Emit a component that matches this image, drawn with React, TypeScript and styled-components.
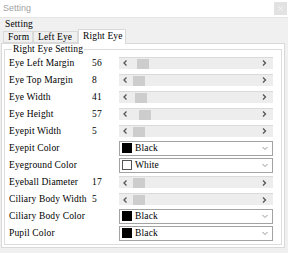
import React from 'react'
import styled, { createGlobalStyle } from 'styled-components'

const GlobalStyle = createGlobalStyle`
  html, body {
    margin: 0;
    padding: 0;
    background: #f0f0f0;
  }
  body {
    width: 288px;
    height: 253px;
    overflow: hidden;
  }
`

const Window = styled.div`
  width: 288px;
  height: 253px;
  box-sizing: border-box;
  display: flex;
  flex-direction: column;
  background: #f0f0f0;
  font-family: 'Liberation Serif', 'DejaVu Serif', serif;
  font-size: 9.5px;
  letter-spacing: 0.15px;
  color: #000;
`

const TitleBar = styled.div`
  height: 17px;
  flex: none;
  background: #fff;
  border-bottom: 1px solid #e6e6e6;
  display: flex;
  justify-content: space-between;
  align-items: flex-start;
  padding-left: 3px;
`

const Title = styled.span`
  font-family: 'Liberation Sans', Arial, sans-serif;
  font-size: 9px;
  letter-spacing: 0;
  line-height: 16px;
  color: #a2a2a2;
`

const CloseBtn = styled.div`
  width: 13px;
  height: 13px;
  margin: 2px 1px 0 0;
  background: #e2e2e2;
  display: flex;
  align-items: center;
  justify-content: center;
`

const Caption = styled.div`
  flex: none;
  height: 10px;
  line-height: 10px;
  margin-top: 1px;
  padding-left: 5px;
`

const TabStrip = styled.div`
  flex: none;
  height: 14px;
  display: flex;
  align-items: flex-end;
  padding-left: 3px;
`

const Tab = styled.div<{ $active?: boolean; $w: number }>`
  position: relative;
  box-sizing: border-box;
  width: ${({ $w }) => $w}px;
  height: ${({ $active }) => ($active ? 15 : 12)}px;
  margin-bottom: ${({ $active }) => ($active ? -1 : 0)}px;
  z-index: ${({ $active }) => ($active ? 1 : 0)};
  background: ${({ $active }) => ($active ? '#fff' : '#f0f0f0')};
  border: 1px solid #d9d9d9;
  border-bottom: ${({ $active }) => ($active ? 'none' : '1px solid #d9d9d9')};
  padding-left: 4px;
  line-height: ${({ $active }) => ($active ? 12 : 11)}px;
  white-space: nowrap;
`

const Panel = styled.div`
  flex: 1;
  margin: 0 3px 5px 1px;
  background: #fff;
  border: 1px solid #d9d9d9;
  display: flex;
  flex-direction: column;
`

const Group = styled.fieldset`
  flex: 1;
  margin: 0 2px 2px 2px;
  padding: 0 0 0 4px;
  border: 1px solid #dcdcdc;
  min-width: 0;
`

const Legend = styled.legend`
  padding: 0 1px;
  margin-left: 3px;
  line-height: 10px;
`

const Row = styled.div`
  height: 17.1px;
  display: grid;
  grid-template-columns: 83px 27px 154px;
  align-items: center;
  white-space: nowrap;
`

const Slider = styled.div`
  box-sizing: border-box;
  height: 12px;
  display: flex;
  background: #ededed;
  border-top: 1px solid #dadada;
`

const Arrow = styled.div<{ $right?: boolean }>`
  width: 12px;
  flex: none;
  display: flex;
  align-items: center;
  justify-content: center;
  padding-right: ${({ $right }) => ($right ? 3 : 0)}px;
`

const Track = styled.div`
  flex: 1;
  position: relative;
`

const Thumb = styled.div`
  position: absolute;
  top: 1px;
  width: 12px;
  height: 10px;
  background: #cdcdcd;
`

const Combo = styled.div`
  box-sizing: border-box;
  height: 15px;
  border: 1px solid #a3a3a3;
  background: #fff;
  display: flex;
  align-items: center;
  padding: 0 4px 0 2px;
`

const Swatch = styled.div<{ $color: string }>`
  box-sizing: border-box;
  width: 10px;
  height: 10px;
  background: ${({ $color }) => $color};
  border: 1px solid ${({ $color }) => ($color === '#fff' ? '#555' : '#000')};
  margin-right: 3px;
`

const ComboText = styled.span`
  flex: 1;
`

const Chevron = ({ dir }: { dir: 'left' | 'right' | 'down' }) => {
  const d =
    dir === 'left' ? 'M3.5 0.5 L1 3 L3.5 5.5' : dir === 'right' ? 'M1 0.5 L3.5 3 L1 5.5' : 'M0.5 1 L3 3.5 L5.5 1'
  const w = dir === 'down' ? 6 : 5
  const h = dir === 'down' ? 5 : 6
  return (
    <svg width={w} height={h} viewBox={`0 0 ${w} ${h}`}>
      <path d={d} fill="none" stroke={dir === 'down' ? '#8a8a8a' : '#555'} strokeWidth={dir === 'down' ? 0.9 : 1.3} />
    </svg>
  )
}

type Item =
  | { label: string; kind: 'slider'; value: number; pos: number }
  | { label: string; kind: 'color'; color: string; name: string }

const items: Item[] = [
  { label: 'Eye Left Margin', kind: 'slider', value: 56, pos: 6 },
  { label: 'Eye Top Margin', kind: 'slider', value: 8, pos: 2 },
  { label: 'Eye Width', kind: 'slider', value: 41, pos: 4 },
  { label: 'Eye Height', kind: 'slider', value: 57, pos: 8 },
  { label: 'Eyepit Width', kind: 'slider', value: 5, pos: 2 },
  { label: 'Eyepit Color', kind: 'color', color: '#000', name: 'Black' },
  { label: 'Eyeground Color', kind: 'color', color: '#fff', name: 'White' },
  { label: 'Eyeball Diameter', kind: 'slider', value: 17, pos: 2 },
  { label: 'Ciliary Body Width', kind: 'slider', value: 5, pos: 2 },
  { label: 'Ciliary Body Color', kind: 'color', color: '#000', name: 'Black' },
  { label: 'Pupil Color', kind: 'color', color: '#000', name: 'Black' },
]

const App = () => {
  return (
    <Window>
      <GlobalStyle />
      <TitleBar>
        <Title>Setting</Title>
        <CloseBtn>
          <svg width="5" height="5" viewBox="0 0 5 5">
            <path d="M0.5 0.5 L4.5 4.5 M4.5 0.5 L0.5 4.5" stroke="#f7f7f7" strokeWidth="0.9" />
          </svg>
        </CloseBtn>
      </TitleBar>
      <Caption>Setting</Caption>
      <TabStrip>
        <Tab $w={30}>Form</Tab>
        <Tab $w={45}>Left Eye</Tab>
        <Tab $w={48} $active>
          Right Eye
        </Tab>
      </TabStrip>
      <Panel>
        <Group>
          <Legend>Right Eye Setting</Legend>
          {items.map((it) => (
            <Row key={it.label}>
              <span>{it.label}</span>
              <span>{it.kind === 'slider' ? it.value : ''}</span>
              {it.kind === 'slider' ? (
                <Slider>
                  <Arrow>
                    <Chevron dir="left" />
                  </Arrow>
                  <Track>
                    <Thumb style={{ left: it.pos }} />
                  </Track>
                  <Arrow $right>
                    <Chevron dir="right" />
                  </Arrow>
                </Slider>
              ) : (
                <Combo>
                  <Swatch $color={it.color} />
                  <ComboText>{it.name}</ComboText>
                  <Chevron dir="down" />
                </Combo>
              )}
            </Row>
          ))}
        </Group>
      </Panel>
    </Window>
  )
}

export default App
